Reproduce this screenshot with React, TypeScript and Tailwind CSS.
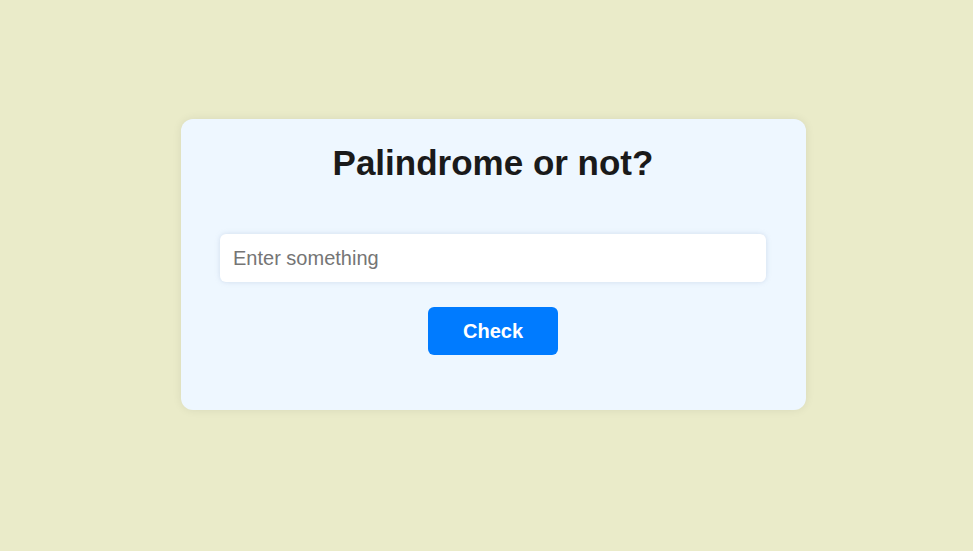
import React, { useState } from 'react'

const App: React.FC = () => {
  const [text, setText] = useState('')

  return (
    <div className="min-h-[551px] w-full bg-[#eaebc9] pt-[119px] pl-[181px] font-['Liberation_Sans',Arial,sans-serif]">
      <div className="w-[625px] h-[291px] rounded-xl bg-[#eef7ff] pl-[39px] pr-[40px] pt-[24px] shadow-[0_0_10px_rgba(0,0,0,0.08)]">
        <h1 className="text-center text-[35px] font-bold leading-[40px] text-[#1a1a1a]">
          Palindrome or not?
        </h1>
        <input
          type="text"
          value={text}
          onChange={(e) => setText(e.target.value)}
          placeholder="Enter something"
          className="mt-[51px] block h-[48px] w-full rounded-md bg-white px-[13px] text-[20px] text-[#333] placeholder:text-[#757575] outline-none shadow-[0_0_5px_rgba(150,170,200,0.35)]"
        />
        <div className="mt-[25px] flex justify-center">
          <button className="h-[48px] w-[130px] rounded-md bg-[#007bff] text-[20px] font-bold text-white">
            Check
          </button>
        </div>
      </div>
    </div>
  )
}

export default App
